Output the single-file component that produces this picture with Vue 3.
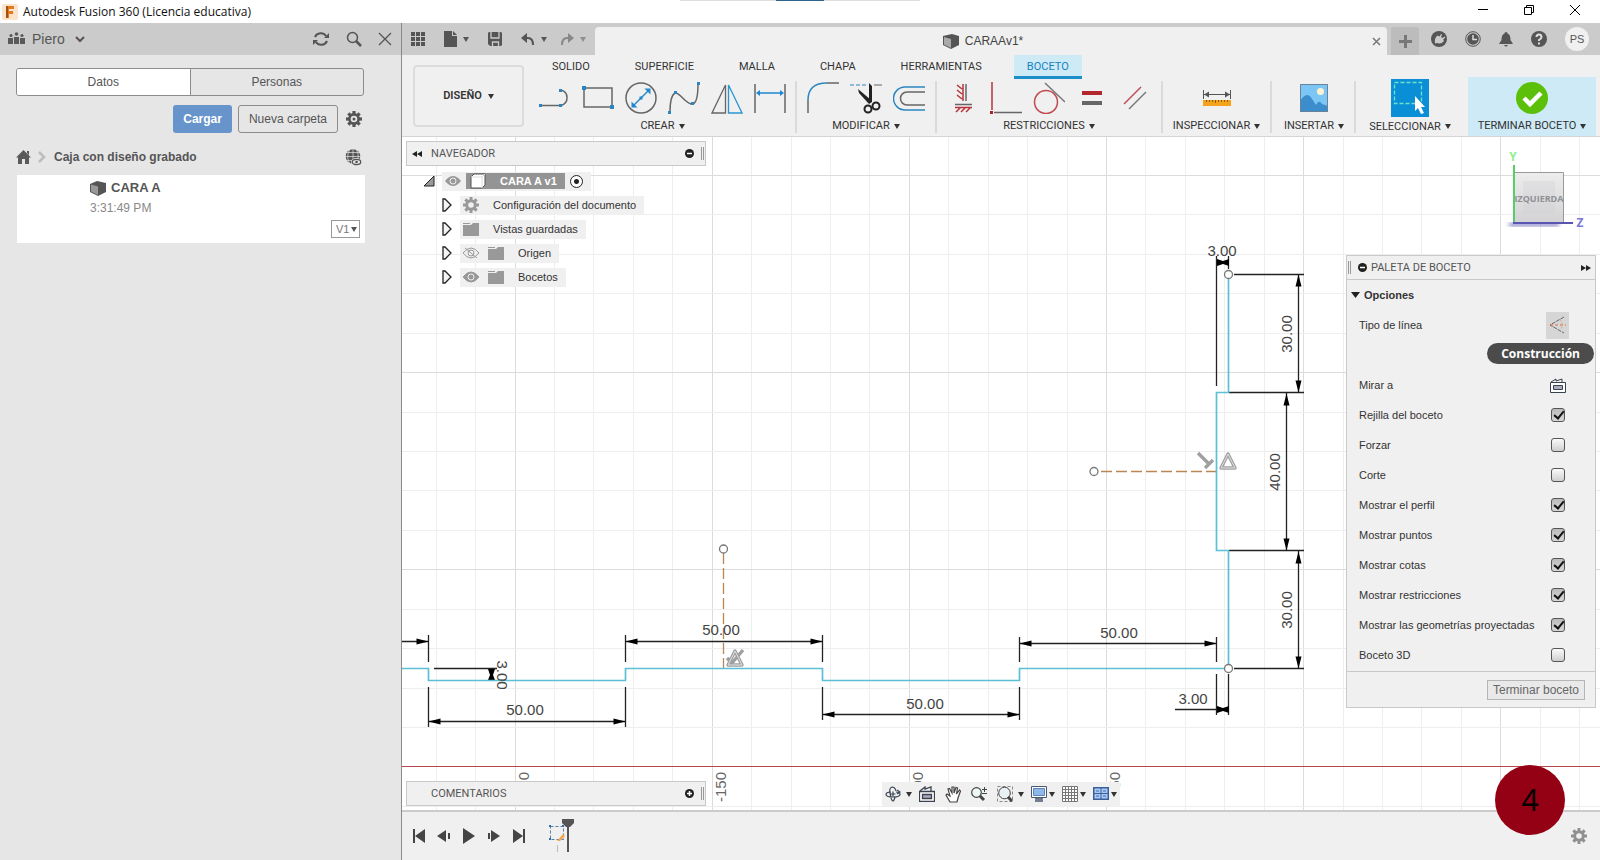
<script setup>
import { reactive } from 'vue'

const tabs = ['SOLIDO', 'SUPERFICIE', 'MALLA', 'CHAPA', 'HERRAMIENTAS', 'BOCETO']

const browserRows = [
  { label: 'Configuración del documento', icon: 'gear' },
  { label: 'Vistas guardadas', icon: 'folder' },
  { label: 'Origen', icon: 'folder', eye: 'off' },
  { label: 'Bocetos', icon: 'folder', eye: 'on' },
]

const options = reactive([
  { id: 'grid', label: 'Rejilla del boceto', on: true },
  { id: 'snap', label: 'Forzar', on: false },
  { id: 'slice', label: 'Corte', on: false },
  { id: 'profile', label: 'Mostrar el perfil', on: true },
  { id: 'points', label: 'Mostrar puntos', on: true },
  { id: 'dims', label: 'Mostrar cotas', on: true },
  { id: 'constraints', label: 'Mostrar restricciones', on: true },
  { id: 'projected', label: 'Mostrar las geometrías proyectadas', on: true },
  { id: 'sketch3d', label: 'Boceto 3D', on: false },
])

const step = 39.43
const columns = Array.from({ length: 60 }, (_, i) => ({
  at: Math.floor(515 + step * (i - 2)) + 0.5,
  major: (i - 2) % 5 === 0,
}))
const rows = Array.from({ length: 40 }, (_, i) => ({
  at: Math.round(175 + step * i) + 0.5,
  major: i % 5 === 0,
}))

const axisLabels = [
  { x: 529, text: '-200' },
  { x: 726, text: '-150' },
  { x: 923, text: '-100' },
  { x: 1120, text: '-50' },
]

// Each arrow head: tip position and the rotation of its direction.
const arrows = [
  [428, 641, 0], [625, 641, 180], [822, 641, 0], [1019, 643, 180], [1216, 643, 0],
  [428, 721, 180], [625, 721, 0], [822, 714, 180], [1019, 714, 0],
  [1298, 274, -90], [1298, 392, 90], [1286, 393, -90], [1286, 550, 90],
  [1298, 551, -90], [1298, 668, 90],
]

const gearTeeth = [0, 45, 90, 135, 180, 225, 270, 315]
</script>

<template>
  <div class="app">
    <header class="titlebar">
      <svg class="logo" width="16" height="16" viewBox="0 0 16 16">
        <rect width="16" height="16" rx="2" fill="#fbe3cc" />
        <path d="M4 2h8v3H7v2h4v3H7v4H4z" fill="#e07a1f" />
        <path d="M4 2h2v12H4z" fill="#a4500f" />
      </svg>
      <h1>Autodesk Fusion 360 (Licencia educativa)</h1>
      <i class="handle" />
      <div class="window-buttons">
        <button aria-label="Minimizar"><svg width="12" height="12"><path d="M1 5.500h10" stroke="#000" fill="none" /></svg></button>
        <button aria-label="Restaurar"><svg width="12" height="12"><path d="M1.500 3.500h7v7h-7zM3.500 3.500v-2h7v7h-2" stroke="#000" fill="none" /></svg></button>
        <button aria-label="Cerrar"><svg width="12" height="12"><path d="M1 1l10 10M11 1L1 11" stroke="#000" fill="none" /></svg></button>
      </div>
    </header>

    <div class="body">
      <aside class="data-panel">
        <div class="team-bar">
          <svg width="17" height="14" viewBox="0 0 17 14" fill="#5a5a5a">
            <circle cx="3" cy="3.500" r="1.600" /><circle cx="8.500" cy="2" r="1.800" /><circle cx="14" cy="3.500" r="1.600" />
            <path d="M0 6h5v6H0zM6 5h5v7H6zM12 6h5v6h-5z" />
          </svg>
          <button class="team">Piero
            <svg width="10" height="7" fill="none" stroke="#555" stroke-width="2"><path d="M1 1l4 4 4-4" /></svg>
          </button>
          <button aria-label="Actualizar">
            <svg width="18" height="16" viewBox="0 0 18 16" fill="none" stroke="#555" stroke-width="2">
              <path d="M3 6a6.200 6 0 0 1 11-1M15 10a6.200 6 0 0 1-11 1" />
              <path d="M17 2v5h-5zM1 14V9h5z" fill="#555" stroke="none" />
            </svg>
          </button>
          <button aria-label="Buscar">
            <svg width="16" height="16" fill="none" stroke="#555"><circle cx="6.500" cy="6.500" r="5" stroke-width="1.500" /><path d="M10 10l5 5" stroke-width="2.500" /></svg>
          </button>
          <button aria-label="Cerrar panel">
            <svg width="14" height="14" fill="none" stroke="#555" stroke-width="1.300"><path d="M1 1l12 12M13 1L1 13" /></svg>
          </button>
        </div>

        <div class="data-content">
          <div class="segmented">
            <button class="active">Datos</button>
            <button>Personas</button>
          </div>
          <div class="actions">
            <button class="primary">Cargar</button>
            <button class="outline">Nueva carpeta</button>
            <button class="plain" aria-label="Ajustes">
              <svg width="16" height="16" viewBox="-8 -8 16 16" fill="#555">
                <rect v-for="a in gearTeeth" :key="a" x="-1.600" y="-8" width="3.200" height="4" :transform="`rotate(${a})`" />
                <circle r="4.600" fill="none" stroke="#555" stroke-width="2.600" /><circle r="1.500" />
              </svg>
            </button>
          </div>
          <nav class="crumbs">
            <a href="#" aria-label="Inicio">
              <svg width="15" height="14" fill="#5a5a5a"><path d="M7.500 0L15 7.500h-2V14H9V9H6v5H2V7.500H0zM11 1h2v4l-2-2z" /></svg>
            </a>
            <svg width="9" height="12" fill="none" stroke="#bdbdbd" stroke-width="2.500"><path d="M1 1l5 5-5 5" /></svg>
            <a href="#">Caja con diseño grabado</a>
            <svg class="globe" width="17" height="17" viewBox="0 0 17 17">
              <circle cx="8" cy="7.500" r="7.300" fill="#555" />
              <path d="M8 0v15M0 7.500h16M1 3.500h14M1 11.500h14M5 0c-3 5-3 10 0 15M11 0c3 5 3 10 0 15" fill="none" stroke="#e6e6e6" stroke-width=".7" />
              <ellipse cx="11.500" cy="13" rx="5.500" ry="3.900" fill="#e6e6e6" />
              <ellipse cx="11.500" cy="13" rx="4.200" ry="2.600" fill="none" stroke="#555" stroke-width="1.300" /><circle cx="11.500" cy="13" r="1.300" fill="#555" />
            </svg>
          </nav>
          <article class="card">
            <div class="card-title">
              <svg width="16" height="15" viewBox="0 0 16 15"><path d="M0 3l7-3 9 2v9l-8 4-8-4z" fill="#555" /><path d="M1 3.500l7 2V14l-7-3.500z" fill="#999" /></svg>
              <h2>CARA A</h2>
            </div>
            <time>3:31:49 PM</time>
            <label class="version">
              <select aria-label="Versión"><option>V1</option></select>
              <i class="caret" />
            </label>
          </article>
        </div>
      </aside>

      <main class="workspace">
        <div class="tabbar">
          <div class="quick">
            <button aria-label="Panel de datos"><svg width="14" height="14" fill="#555"><path d="M0 0h4v4H0zM5 0h4v4H5zM10 0h4v4h-4zM0 5h4v4H0zM5 5h4v4H5zM10 5h4v4h-4zM0 10h4v4H0zM5 10h4v4H5zM10 10h4v4h-4z" /></svg></button>
            <button aria-label="Archivo"><svg width="13" height="16" fill="#555"><path d="M0 0h8v5h5v11H0zM9 0l4 4H9z" /></svg><i class="caret" /></button>
            <button aria-label="Guardar"><svg width="14" height="14"><path d="M0 1l1-1h12l1 1v12l-1 1H2l-2-2z" fill="#555" /><path d="M3 0v6h8V0M4.500 14v-4h6v4" fill="none" stroke="#cbcbcb" stroke-width="1.300" /></svg></button>
            <button aria-label="Deshacer"><svg width="14" height="13"><path d="M2 5h5q5 0 5 7" fill="none" stroke="#555" stroke-width="2" /><path d="M0 5l6-5v10z" fill="#555" /></svg><i class="caret" /></button>
            <button class="disabled" aria-label="Rehacer"><svg width="14" height="13"><path d="M12 5H7q-5 0-5 7" fill="none" stroke="#888" stroke-width="2" /><path d="M14 5L8 0v10z" fill="#888" /></svg><i class="caret" /></button>
          </div>
          <div class="doc-tab">
            <svg width="16" height="15" viewBox="0 0 16 15"><path d="M0 2l9-2 7 2v9l-8 4-8-4z" fill="#555" /><path d="M1 3l7 2V14l-7-3.500z" fill="#aaa" /></svg>
            <span>CARAAv1*</span>
            <button aria-label="Cerrar documento"><svg width="9" height="9" fill="none" stroke="#777" stroke-width="1.500"><path d="M1 1l7 7M8 1L1 8" /></svg></button>
          </div>
          <button class="new-tab" aria-label="Nuevo diseño"><svg width="13" height="13" fill="none" stroke="#777" stroke-width="3"><path d="M6.500 0v13M0 6.500h13" /></svg></button>
          <div class="status">
            <button aria-label="Extensiones"><svg width="16" height="16"><circle cx="8" cy="8" r="8" fill="#555" /><path d="M4 12.500Q3 7 6.500 4.500l2 1L10 3l1 .7-1 2.300 1.500 1 2-1.500.8 1-2 1.800.5 2Q10 13.500 6 12z" fill="#cbcbcb" /></svg></button>
            <button aria-label="Estado de trabajos"><svg width="16" height="16"><circle cx="8" cy="8" r="7.300" fill="none" stroke="#555" /><circle cx="8" cy="8" r="5.800" fill="#555" /><path d="M8 4v4.500h4" fill="none" stroke="#ddd" stroke-width="1.500" /></svg></button>
            <button aria-label="Notificaciones"><svg width="14" height="15" fill="#555"><path d="M7 0c1 0 1.500 1 1.500 1.500C11 2.500 11.500 5 11.500 8L14 12H0l2.500-4C2.500 5 3 2.500 5.500 1.500 5.500 1 6 0 7 0zM5 13h4q-2 3-4 0z" /></svg></button>
            <button aria-label="Ayuda"><svg width="16" height="16"><circle cx="8" cy="8" r="8" fill="#555" /><path d="M5.500 6q0-2.500 2.500-2.500T10.500 6Q10.500 7.500 8 9v1M8 11.500v2" fill="none" stroke="#ddd" stroke-width="2" /></svg></button>
            <button class="avatar">PS</button>
          </div>
        </div>

        <div class="ribbon">
          <button class="mode">DISEÑO <i class="caret" /></button>
          <div class="ribbon-main">
            <nav class="ribbon-tabs">
              <button v-for="t in tabs" :key="t" :class="{ active: t === 'BOCETO' }">{{ t }}</button>
            </nav>
            <div class="groups">
              <section class="group create">
                <div class="tools">
                  <button aria-label="Línea"><svg width="32" height="32" fill="none" stroke="#666"><path d="M1.500 23.500h21" stroke-width="1.500" /><path d="M22 8a8 8 0 0 1 0 15.500" stroke-width="1.500" /><path d="M0 22h3v3H0zM20 22h3v3h-3zM20 7h3v3h-3z" fill="#2b86c0" stroke="none" /></svg></button>
                  <button aria-label="Rectángulo"><svg width="32" height="32" fill="none" stroke="#666" stroke-width="1.500"><path d="M2 6h28v19H2z" /><path d="M0 4h4v4H0zM28 23h4v4h-4z" fill="#2b86c0" stroke="none" /></svg></button>
                  <button aria-label="Círculo"><svg width="32" height="32" fill="none" stroke="#666" stroke-width="1.500"><circle cx="16" cy="16" r="15" /><path d="M9 23L23 9" stroke="#2b86c0" /><path d="M6.500 25.500v-6l6 6zM25.500 6.500h-6l6 6zM14.500 14.500h3v3h-3z" fill="#1e88d2" stroke="none" /></svg></button>
                  <button aria-label="Spline"><svg width="32" height="32" fill="none" stroke="#666" stroke-width="1.500"><path d="M2 30Q2 14 7 11C12 10 19 24 25 22Q30 20 30 2" /><path d="M0 29h3v3H0zM6 9h3v3H6zM23 20h3v3h-3zM29 0h3v3h-3z" fill="#2b86c0" stroke="none" /></svg></button>
                  <button aria-label="Simetría"><svg width="32" height="32" fill="none" stroke-width="1.300"><path d="M14.500 3v28H1z" stroke="#666" /><path d="M17.500 3v28H31z" stroke="#2b95d0" /></svg></button>
                  <button aria-label="Cota"><svg width="32" height="32" fill="none"><path d="M1 2v29M31 2v29" stroke="#666" stroke-width="1.500" /><path d="M3 11h26" stroke="#1e88d2" stroke-width="1.500" /><path d="M2 11l4-3v6zM30 11l-4-3v6z" fill="#1e88d2" /></svg></button>
                </div>
                <button class="group-label">CREAR <i class="caret" /></button>
              </section>
              <section class="group modify">
                <div class="tools">
                  <button aria-label="Empalme"><svg width="32" height="32" fill="none" stroke-width="1.500"><path d="M1 18v13M20 1h12" stroke="#666" /><path d="M1 18Q1 1 20 1" stroke="#2b86c0" /></svg></button>
                  <button aria-label="Recortar"><svg width="32" height="32" fill="none"><path d="M0 3h18" stroke="#2b86c0" stroke-dasharray="4 2" /><path d="M24 3h8" stroke="#666" /><path d="M19 1l3 3v16l-3 2zM8 7l13 11-2 4L9 11z" fill="#222" /><circle cx="18" cy="27" r="3.500" stroke="#222" stroke-width="2" /><circle cx="26" cy="24" r="3.500" stroke="#222" stroke-width="2" /></svg></button>
                  <button aria-label="Desfase"><svg width="32" height="32" fill="none" stroke-width="1.500"><path d="M32 5H12a11 11 0 0 0 0 23h20" stroke="#2b86c0" /><path d="M32 10H14a6.500 6.500 0 0 0 0 13h18" stroke="#666" /></svg></button>
                </div>
                <button class="group-label">MODIFICAR <i class="caret" /></button>
              </section>
              <section class="group constrain">
                <div class="tools">
                  <button aria-label="Horizontal/Vertical"><svg width="32" height="32" fill="none" stroke="#b8333a" stroke-width="1.500"><path d="M16 2v17M10 3l5 4M10 8l5 4M10 13l5 4M13 26l-4 4M18 26l-4 4M23 26l-4 4M8 25.500h17" /><path d="M19 2v17M8 22.500h17" stroke="#666" /></svg></button>
                  <button aria-label="Coincidente"><svg width="32" height="32" fill="none" stroke-width="1.500"><path d="M2 0v28" stroke="#b8333a" /><path d="M4 30.500h28" stroke="#666" /><path d="M0 29h3v3H0z" fill="#a8232a" /></svg></button>
                  <button aria-label="Tangente"><svg width="32" height="32" fill="none" stroke-width="1.500"><circle cx="13" cy="20" r="11.500" stroke="#c04a50" /><path d="M12 1l20 19" stroke="#777" /></svg></button>
                  <button aria-label="Igual"><svg width="32" height="32"><path d="M6 9h20v4H6z" fill="#b3262d" /><path d="M6 19h20v4H6z" fill="#666" /></svg></button>
                  <button aria-label="Paralela"><svg width="32" height="32" fill="none" stroke-width="1.500"><path d="M5 22L22 5" stroke="#c04a50" /><path d="M10 27l17-17" stroke="#777" /></svg></button>
                </div>
                <button class="group-label">RESTRICCIONES <i class="caret" /></button>
              </section>
              <section class="group inspect">
                <div class="tools">
                  <button aria-label="Medir"><svg width="32" height="32"><path d="M2.500 8v9M29.500 8v9M3 12.500h26" stroke="#555" fill="none" /><path d="M3 12.500l5-3v6zM29 12.500l-5-3v6z" fill="#555" /><path d="M2 18h28v6H2z" fill="#f5a31a" /><path d="M5.500 18v2M8.500 18v2M11.500 18v2M14.500 18v3M17.500 18v2M20.500 18v2M23.500 18v2M26.500 18v2" stroke="#8a5a00" /></svg></button>
                </div>
                <button class="group-label">INSPECCIONAR <i class="caret" /></button>
              </section>
              <section class="group insert">
                <div class="tools">
                  <button aria-label="Insertar imagen"><svg width="32" height="32"><path d="M2 2h28v28H2z" fill="#7cc6f6" /><path d="M2 30V19q7-11 12-2l4 6q3-6 6-1l6 2v6z" fill="#3b8ecb" /><circle cx="22.500" cy="9.500" r="3.500" fill="#fff3cf" /><path d="M2.500 2.500h27v27h-27z" fill="none" stroke="#68839a" /></svg></button>
                </div>
                <button class="group-label">INSERTAR <i class="caret" /></button>
              </section>
              <section class="group select">
                <div class="tools">
                  <button aria-label="Seleccionar"><svg width="38" height="38"><path d="M0 0h38v38H0z" fill="#0a8fd6" /><path d="M3.500 3.500h27v21h-27z" fill="none" stroke="#6be3c8" stroke-width="1.300" stroke-dasharray="4 2" /><path d="M24 17v15l3-3 3 6 3-1-3-6h4z" fill="#fff" /></svg></button>
                </div>
                <button class="group-label">SELECCIONAR <i class="caret" /></button>
              </section>
              <section class="group finish">
                <div class="tools">
                  <button aria-label="Terminar boceto"><svg width="32" height="32"><circle cx="16" cy="16" r="16" fill="#5cc00a" /><path d="M8 16l6 6 11-11" fill="none" stroke="#fff" stroke-width="4.500" /></svg></button>
                </div>
                <button class="group-label">TERMINAR BOCETO <i class="caret" /></button>
              </section>
            </div>
          </div>
        </div>

        <div class="canvas">
          <svg class="sheet">
            <g transform="translate(-402 -137)">
              <g class="grid-lines">
                <path v-for="c in columns" :key="'c' + c.at" :class="{ major: c.major }" :d="`M${c.at} 130v1500`" />
                <path v-for="r in rows" :key="'r' + r.at" :class="{ major: r.major }" :d="`M402 ${r.at}h2400`" />
              </g>
              <path d="M402 766.500h2400" stroke="#b8474d" />
              <g class="numbers">
                <text v-for="l in axisLabels" :key="l.text" text-anchor="end" class="axis" :transform="`translate(${l.x} 772) rotate(-90)`">{{ l.text }}</text>
              </g>

              <g class="dims">
                <path d="M402 641.500h26M428.500 635v27M625.500 635v27M625 641.500h197M822.500 635v27M1019.500 637v25M1019 643.500h197M1216.500 637v25" />
                <path d="M428.500 687v40M625.500 687v40M428 721.500h197M822.500 687v33M1019.500 687v33M822 714.500h197" />
                <path d="M1216.500 674v41M1228.500 674v41M1175 709.500h54M434 668.500h63M491.500 668v12" />
                <path d="M1216.500 256v130M1228.500 256v13M1217 262.500h11M1234 274.500h70M1229 392.500h75M1229 550.500h75M1234 668.500h70" />
                <path d="M1298.500 274v118M1286.500 393v157M1298.500 551v117" />
              </g>
              <path v-for="(a, i) in arrows" :key="i" d="M0 0l-12-3v6z" :transform="`translate(${a[0] + 0.5} ${a[1] + 0.5}) rotate(${a[2]})`" />
              <path d="M1217 259l6 2 6-2v7l-6-2-6 2zM1217 706l6 2 6-2v7l-6-2-6 2zM488 669h7l-2 6 2 5h-7l2-5z" />

              <g fill="none" stroke="#bd8454" stroke-width="1.300" stroke-dasharray="11 4">
                <path d="M723.500 553v115" /><path d="M1101 471.500h115" />
              </g>
              <path class="profile" d="M402 668.500h26.500v12h197v-12h197v12h197v-12h209V550.500h-12V392.500h12V274" />
              <g class="points">
                <circle cx="723.500" cy="549" r="4" /><circle cx="1094" cy="471.500" r="4" />
                <circle cx="1228.500" cy="274.500" r="4" /><circle cx="1228.500" cy="668.500" r="4" />
              </g>
              <g class="marks">
                <path d="M1221 468h14l-7-14z" /><path d="M1198 453l11 11M1205 468l8-8" />
                <path d="M728 665h14l-7-14zM727 658l5 5 11-13" />
              </g>
              <path class="mark-core" d="M1221 468h14l-7-14zM728 665h14l-7-14z" />

              <g class="numbers" text-anchor="middle">
                <text x="525" y="715">50.00</text><text x="721" y="635">50.00</text>
                <text x="925" y="709">50.00</text><text x="1119" y="638">50.00</text>
                <text x="1193" y="704">3.00</text><text x="1222" y="256">3.00</text>
                <text transform="translate(497 675) rotate(90)">3.00</text>
                <text transform="translate(1292 334) rotate(-90)">30.00</text>
                <text transform="translate(1280 472) rotate(-90)">40.00</text>
                <text transform="translate(1292 610) rotate(-90)">30.00</text>
              </g>
            </g>
          </svg>

          <svg class="view-cube" width="80" height="84" viewBox="0 0 80 84">
            <defs>
              <linearGradient id="face" x1="0" y1="0" x2="0" y2="1"><stop offset="0" stop-color="#ededed" /><stop offset="1" stop-color="#d3d3d5" /></linearGradient>
              <filter id="soft"><feGaussianBlur stdDeviation="2" /></filter>
            </defs>
            <path d="M4 74h50v3H4z" fill="#6b66b8" filter="url(#soft)" />
            <path d="M9.500 23.500h49v50h-49z" fill="url(#face)" stroke="#999" />
            <path d="M18 32h32v33H18z" fill="#d0d0d3" opacity=".35" />
            <path d="M9 16v57" stroke="#55cf66" stroke-width="2" /><path d="M8 74h60" stroke="#5a55b0" stroke-width="2" />
            <text x="34" y="53" text-anchor="middle" class="cube-face">IZQUIERDA</text>
            <text x="8" y="12" text-anchor="middle" class="cube-axis" fill="#8fee8f">Y</text>
            <text x="75" y="78" text-anchor="middle" class="cube-axis" fill="#7d78d8">Z</text>
          </svg>

          <div class="browser">
            <div class="dock">
              <svg width="10" height="6" fill="#222"><path d="M5 0v6L0 3zM10 0v6L5 3z" /></svg>
              <span>NAVEGADOR</span>
              <svg width="9" height="9"><circle cx="4.500" cy="4.500" r="4.500" fill="#222" /><path d="M2 4.500h5" stroke="#fff" stroke-width="1.500" /></svg>
              <i class="grip" />
            </div>
            <div class="tree">
              <div class="tree-row root">
                <svg width="12" height="12"><path d="M11 1v10H1z" fill="#999" stroke="#222" /></svg>
                <div class="chip">
                  <svg width="16" height="10"><path d="M0 5q8-10 16 0-8 10-16 0z" fill="#999" /><circle cx="8" cy="5" r="3" fill="#999" stroke="#eee" /></svg>
                  <span class="root-name">
                    <svg width="16" height="16"><path d="M1 4l3-3h11v11l-3 3H1z" fill="#fff" stroke="#555" /><path d="M12 4v11M1 4h11l3-3" stroke="#ddd" fill="none" /></svg>
                    CARA A v1
                  </span>
                  <input type="radio" checked aria-label="Activar CARA A v1" />
                </div>
              </div>
              <div v-for="r in browserRows" :key="r.label" class="tree-row">
                <svg width="10" height="14"><path d="M1 1h2l6 6-6 6H1z" fill="#f4f4f4" stroke="#222" stroke-width="1.300" /></svg>
                <div class="chip">
                  <svg v-if="r.eye" width="16" height="12">
                    <path d="M0 6q8-10 16 0-8 10-16 0z" :fill="r.eye === 'on' ? '#999' : '#f0f0f0'" stroke="#999" />
                    <circle cx="8" cy="6" r="3" :fill="r.eye === 'on' ? '#999' : 'none'" :stroke="r.eye === 'on' ? '#eee' : '#999'" />
                    <path v-if="r.eye === 'off'" d="M2 1l12 10" stroke="#999" />
                  </svg>
                  <svg v-if="r.icon === 'gear'" width="16" height="16" viewBox="-8 -8 16 16" fill="#999">
                    <rect v-for="a in gearTeeth" :key="a" x="-1.500" y="-8" width="3" height="4" :transform="`rotate(${a})`" />
                    <circle r="4.300" fill="none" stroke="#999" stroke-width="3" />
                  </svg>
                  <svg v-else width="16" height="13" fill="#999"><path d="M0 0h7v1H0zM0 2h8l2-2h6v13H0z" /></svg>
                  <span>{{ r.label }}</span>
                </div>
              </div>
            </div>
          </div>

          <div class="dock comments">
            <span>COMENTARIOS</span>
            <svg width="9" height="9"><circle cx="4.500" cy="4.500" r="4.500" fill="#222" /><path d="M2 4.500h5M4.500 2v5" stroke="#fff" stroke-width="1.500" /></svg>
            <i class="grip" />
          </div>

          <section class="palette">
            <div class="palette-head">
              <i class="grip" />
              <svg width="9" height="9"><circle cx="4.500" cy="4.500" r="4.500" fill="#222" /><path d="M2 4.500h5" stroke="#fff" stroke-width="1.500" /></svg>
              <span>PALETA DE BOCETO</span>
              <svg width="10" height="6" fill="#222"><path d="M0 0v6l5-3zM5 0v6l5-3z" /></svg>
            </div>
            <div class="palette-body">
              <h3><svg width="9" height="6" fill="#222"><path d="M0 0h9L4.500 6z" /></svg> Opciones</h3>
              <div class="option line-type">
                <span>Tipo de línea</span>
                <button class="pressed" aria-label="Construcción">
                  <svg width="17" height="18" fill="none"><path d="M15 1L1 9l14 8" stroke="#666" stroke-dasharray="4 1" /><path d="M1 9h16" stroke="#e07030" stroke-dasharray="3 2" /><path d="M11 3q4 6 0 12" stroke="#d9a07a" stroke-dasharray="2 2" /></svg>
                </button>
                <span class="tip" role="tooltip">Construcción</span>
              </div>
              <div class="option">
                <span>Mirar a</span>
                <button class="flat" aria-label="Mirar a"><svg width="16" height="15" fill="none" stroke="#3a4250"><path d="M.5 4.500h15v10H.5z" fill="#fff" /><path d="M3.500 7.500h9v4h-9z" fill="#aab" /><path d="M1 4l5-3v2l6-2v3" /></svg></button>
              </div>
              <label v-for="o in options" :key="o.id" class="option" :for="o.id">
                <span>{{ o.label }}</span>
                <input :id="o.id" v-model="o.on" type="checkbox" />
              </label>
            </div>
            <div class="palette-foot"><button>Terminar boceto</button></div>
          </section>

          <div class="viewbar">
            <button aria-label="Órbita"><svg width="16" height="16" fill="none" stroke="#3a4656" stroke-width="1.200"><path d="M6 6Q1 6 1 8.500T8 11t7-2.500-4-2.500" /><path d="M6 11q-3-9 1-10 3 0 4 4M6 12q1 3 2 3t2-4M12 4l3 2-3 2M8 5.500v5M5.500 8h5" /></svg><i class="caret" /></button>
            <button class="lone" aria-label="Mirar a"><svg width="16" height="16" fill="none" stroke="#3a4250" stroke-width="1.300"><path d="M.5 5.500h15v10H.5z" fill="#fff" /><path d="M3.500 8.500h9v4h-9z" fill="#aab" /><path d="M1 5l5-4v2l6-2v4" /></svg></button>
            <button class="lone" aria-label="Encuadre"><svg width="16" height="17" fill="#fff" stroke="#444" stroke-width="1.200"><path d="M5 16L1 9l1-1 3 2-2-7 1.500-.5L7 7V1h2v6l2-5.500 1.500.5L11.500 8l3-4 1 1-2.500 7-1 4z" /></svg></button>
            <button class="lone" aria-label="Zoom"><svg width="16" height="16" fill="none" stroke="#444"><circle cx="5.500" cy="6.500" r="4.800" fill="#eef6f8" stroke-width="1.200" /><path d="M9 10l4 4" stroke-width="3" /><path d="M11 3.500h5M13.500 1v5M11 7.500h5" /></svg></button>
            <button aria-label="Zoom ventana"><svg width="16" height="16" fill="none" stroke="#444"><path d="M.5.500h15v15H.5z" stroke-dasharray="3 2" stroke="#888" /><circle cx="7.500" cy="7" r="5.800" fill="#e8f2f5" /><path d="M11 11l4 4" stroke-width="3" /></svg><i class="caret" /></button>
            <button class="tight" aria-label="Visualización"><svg width="16" height="16" fill="none" stroke="#4a5870"><path d="M.5.500h15v11H.5z" fill="#fff" /><path d="M2.500 2.500h11v7h-11z" fill="#8fb8ea" stroke="#5b86c0" /><path d="M5 12v1h6v-1M4 15h8" stroke-width="1.500" /></svg><i class="caret" /></button>
            <button class="tight" aria-label="Rejilla"><svg width="16" height="16" fill="#fff" stroke="#777"><path d="M.5.500h15v15H.5zM3.500 0v16M6.500 0v16M9.500 0v16M12.500 0v16M0 3.500h16M0 6.500h16M0 9.500h16M0 12.500h16" /></svg><i class="caret" /></button>
            <button class="tight" aria-label="Vistas"><svg width="16" height="14"><path d="M0 0h16v13H0z" fill="#3c5f9c" /><path d="M1.500 1.500h6v4.500h-6zM8.500 1.500h6v4.500h-6zM1.500 7h6v4.500h-6zM8.500 7h6v4.500h-6z" fill="#a9c9f2" /><path d="M3 3h3v2H3zM10 3h3v2h-3zM3 8h3v2H3zM10 8h3v2h-3z" fill="#6f9cd8" /></svg><i class="caret" /></button>
          </div>
        </div>

        <footer class="timeline">
          <button aria-label="Inicio"><svg width="14" height="14" fill="#444"><path d="M1 0h2v14H1zM13 0v14L3 7z" /></svg></button>
          <button aria-label="Paso atrás"><svg width="14" height="14" fill="#444"><path d="M9 1v12L0 7zM11 4h2v6h-2z" /></svg></button>
          <button aria-label="Reproducir"><svg width="14" height="16" fill="#444"><path d="M1 0l12 8-12 8z" /></svg></button>
          <button aria-label="Paso adelante"><svg width="14" height="14" fill="#444"><path d="M4 1v12l9-6zM1 4h2v6H1z" /></svg></button>
          <button aria-label="Final"><svg width="14" height="14" fill="#444"><path d="M11 0h2v14h-2zM1 0v14l10-7z" /></svg></button>
          <button class="feature" aria-label="Boceto">
            <svg width="28" height="34" fill="none">
              <path d="M3.500 7.500h13v13h-13z" stroke="#5a7da0" stroke-dasharray="3 2" />
              <path d="M2 6h2v2H2zM15 6h2v2h-2zM2 19h2v2H2z" fill="#2b70b0" />
              <path d="M10 22l6-7 2 2-5 5z" fill="#f2a648" /><path d="M10.500 26v7" stroke="#bbb" />
              <path d="M15 0h12v4l-4 4h-4l-4-4z" fill="#555" /><path d="M21 4v29" stroke="#555" stroke-width="2" />
            </svg>
          </button>
          <button class="timeline-settings" aria-label="Ajustes de línea de tiempo">
            <svg width="16" height="16" viewBox="-8 -8 16 16" fill="#909090">
              <rect v-for="a in gearTeeth" :key="a" x="-1.500" y="-8" width="3" height="4" :transform="`rotate(${a})`" />
              <circle r="4.300" fill="none" stroke="#909090" stroke-width="3" />
            </svg>
          </button>
          <span class="step-badge">4</span>
        </footer>
      </main>
    </div>
  </div>
</template>

<style>
body {
  margin: 0;
}
</style>

<style scoped>
* {
  box-sizing: border-box;
}
.app {
  display: flex;
  flex-direction: column;
  min-height: 100vh;
  overflow: hidden;
  background: #fff;
  color: #333;
  font: 11px/16px "Liberation Sans", Arial, sans-serif;
}
button {
  display: inline-flex;
  align-items: center;
  justify-content: center;
  margin: 0;
  padding: 0;
  border: 0;
  background: none;
  color: inherit;
  font: inherit;
  white-space: nowrap;
}
svg {
  display: block;
  flex: none;
}
a {
  color: inherit;
  text-decoration: none;
}
h1, h2, h3 {
  margin: 0;
  font: inherit;
}
.caret {
  flex: none;
  border: 3px solid transparent;
  border-top: 5px solid currentColor;
  border-bottom: 0;
}

.titlebar {
  position: relative;
  display: flex;
  align-items: center;
  height: 23px;
  padding: 0 19px 0 2px;
  color: #111;
}
.titlebar h1 {
  flex: 1;
  margin-left: 5px;
  font: 12px/20px "Open Sans", sans-serif;
}
.handle {
  position: absolute;
  top: 0;
  left: 50%;
  width: 240px;
  height: 1px;
  margin-left: -120px;
  background: linear-gradient(90deg, #ddd 96px, #2d648a 96px 144px, #ddd 144px);
}
.window-buttons {
  display: flex;
  gap: 34px;
  margin-top: -3px;
}

.body {
  display: flex;
  flex: 1;
}
.data-panel {
  width: 402px;
  flex: none;
  border-right: 1px solid #8a8a8a;
  background: #e6e6e6;
  color: #555;
}
.team-bar {
  display: flex;
  align-items: center;
  gap: 16px;
  height: 32px;
  padding: 0 9px 0 8px;
  background: #cbcbcb;
}
.team {
  gap: 10px;
  margin: 0 auto 0 -9px;
  font-size: 14px;
}
.data-content {
  padding: 13px 37px 0 16px;
  font-size: 12px;
}
.segmented {
  display: flex;
  height: 28px;
  border: 1px solid #8c8c8c;
  border-radius: 3px;
}
.segmented button {
  flex: 1;
}
.segmented .active {
  border-right: 1px solid #8c8c8c;
  border-radius: 2px 0 0 2px;
  background: #fff;
}
.actions {
  display: flex;
  align-items: center;
  justify-content: flex-end;
  gap: 6px;
  margin-top: 9px;
}
.primary, .outline {
  height: 28px;
  padding: 0 10px;
  border-radius: 3px;
}
.primary {
  background: #6694cb;
  color: #fff;
  font-weight: bold;
}
.outline {
  border: 1px solid #8c8c8c;
}
.plain {
  width: 20px;
}
.crumbs {
  display: flex;
  align-items: center;
  gap: 7px;
  height: 18px;
  margin-top: 15px;
  padding-right: 2px;
  font-weight: bold;
}
.globe {
  margin-left: auto;
}
.card {
  position: relative;
  height: 68px;
  margin: 9px -1px 0 1px;
  padding: 4px 0 0 73px;
  background: #fff;
}
.card-title {
  display: flex;
  align-items: center;
  gap: 5px;
}
.card-title h2 {
  font: bold 13px/18px "Liberation Sans", Arial, sans-serif;
}
.card time {
  display: block;
  margin-top: 3px;
  color: #888;
}
.version {
  position: absolute;
  right: 5px;
  bottom: 5px;
  display: flex;
  align-items: center;
  width: 29px;
  height: 18px;
  border: 1px solid #999;
}
.version select {
  width: 27px;
  padding: 0 0 0 4px;
  border: 0;
  background: none;
  color: #777;
  font: 11px/16px "Liberation Sans", Arial, sans-serif;
  appearance: none;
}
.version .caret {
  position: absolute;
  right: 2px;
}

.workspace {
  display: flex;
  flex: 1;
  flex-direction: column;
  min-width: 0;
}
.tabbar {
  display: flex;
  height: 32px;
  background: #cbcbcb;
  color: #555;
}
.quick {
  display: flex;
  align-items: center;
  gap: 19px;
  width: 193px;
  flex: none;
  padding-left: 9px;
}
.quick button {
  gap: 6px;
}
.quick .disabled {
  margin-left: -6px;
  color: #8f8f8f;
}
.doc-tab {
  position: relative;
  display: flex;
  flex: 1;
  align-items: center;
  justify-content: center;
  gap: 6px;
  margin-top: 4px;
  padding-right: 16px;
  border-radius: 4px 4px 0 0;
  background: #f0f0f0;
  color: #444;
  font-size: 12px;
}
.doc-tab button {
  position: absolute;
  right: 6px;
}
.new-tab {
  width: 28px;
  margin: 4px 0 0 4px;
  border-radius: 3px 3px 0 0;
  background: #bcbcbc;
}
.status {
  display: flex;
  align-items: center;
  gap: 18px;
  padding: 0 11px 0 12px;
}
.status .avatar {
  width: 24px;
  height: 24px;
  border-radius: 50%;
  background: #f0f0f0;
}

.ribbon {
  display: flex;
  height: 82px;
  border-bottom: 1px solid #d4d4d4;
  background: #f0f0f0;
  font-family: Roboto, sans-serif;
}
.mode {
  gap: 6px;
  width: 111px;
  height: 62px;
  flex: none;
  margin: 10px 6px 0 11px;
  border: 2px solid #dcdcdc;
  border-radius: 4px;
  font-weight: 600;
}
.ribbon-main {
  display: flex;
  flex: 1;
  flex-direction: column;
  min-width: 0;
}
.ribbon-tabs {
  display: flex;
  gap: 19px;
  height: 24px;
  padding-left: 9px;
}
.ribbon-tabs button {
  padding: 0 13px;
}
.ribbon-tabs .active {
  background: #cdeaf6;
  box-shadow: inset 0 -3px #1d8fc8;
  color: #1583c0;
}
.groups {
  display: flex;
  flex: 1;
  padding-right: 4px;
}
.group {
  position: relative;
  display: flex;
  flex: none;
  flex-direction: column;
  align-items: center;
  height: 57px;
}
.group:not(.finish, .select)::after {
  position: absolute;
  top: 2px;
  right: 0;
  width: 2px;
  height: 52px;
  background: #dadada;
  content: "";
}
.tools {
  display: flex;
  align-items: center;
  height: 38px;
}
.tools button {
  width: 43px;
}
.group-label {
  gap: 4px;
  height: 20px;
}
.create { width: 267px; padding-right: 2px; }
.modify { width: 140px; padding-right: 2px; }
.constrain { width: 226px; padding-right: 2px; }
.inspect { width: 109px; padding-right: 2px; }
.insert { width: 84px; }
.select { flex: 1; padding-right: 4px; }
.group.finish {
  width: 128px;
  height: 59px;
  margin-top: -2px;
  padding-top: 2px;
  background: #cdeaf6;
}

.canvas {
  position: relative;
  flex: 1;
  min-height: 600px;
  overflow: hidden;
}
.sheet {
  position: absolute;
  width: 100%;
  height: 100%;
}
.grid-lines path {
  stroke: #eee;
}
.grid-lines .major {
  stroke: #dcdcdc;
}
.dims path {
  fill: none;
  stroke: #222;
  stroke-width: 1.3;
}
.profile {
  fill: none;
  stroke: #5dbfd6;
  stroke-width: 1.7;
}
.points circle {
  fill: #fff;
  stroke: #777;
  stroke-width: 1.3;
}
.marks path {
  fill: none;
  stroke: #a0a0a0;
  stroke-width: 3.4;
  stroke-linejoin: round;
}
.mark-core {
  fill: none;
  stroke: #e2e2e2;
}
.numbers {
  fill: #444;
  font-size: 15px;
}
.axis {
  fill: #666;
}
.view-cube {
  position: absolute;
  top: 12px;
  right: 15px;
}
.cube-face {
  fill: #909095;
  font: bold 9px "Open Sans", sans-serif;
}
.cube-axis {
  font: bold 12px "Open Sans", sans-serif;
}

.browser {
  position: absolute;
  top: 4px;
  left: 4px;
  width: 300px;
}
.dock {
  display: flex;
  align-items: center;
  width: 300px;
  height: 25px;
  padding: 0 1px 0 5px;
  border: 1px solid #c9c9c9;
  background: #f0f0f0;
  color: #555;
  font-family: Roboto, sans-serif;
}
.dock span {
  flex: 1;
  margin-left: 9px;
}
.dock .grip {
  margin-left: 7px;
}
.grip {
  width: 3px;
  height: 13px;
  border: 1px solid #999;
  border-width: 0 1px;
}
.comments {
  position: absolute;
  bottom: 4px;
  left: 4px;
  padding-left: 15px;
}
.tree-row {
  display: flex;
  align-items: center;
  gap: 8px;
  height: 24px;
  padding-left: 36px;
}
.tree-row.root {
  gap: 7px;
  margin-top: 3px;
  padding-left: 17px;
}
.chip {
  display: flex;
  align-items: center;
  gap: 9px;
  height: 19px;
  padding: 0 8px 0 3px;
  background: #f0f0f0;
}
.chip span {
  margin-left: 5px;
}
.root .chip {
  gap: 5px;
}
.chip .root-name {
  display: flex;
  align-items: center;
  gap: 14px;
  height: 16px;
  margin: 0;
  padding: 0 8px 0 3px;
  background: #949494;
  color: #fff;
  font-weight: bold;
}
.root-name svg {
  margin-left: 1px;
}
.chip input {
  width: 13px;
  height: 13px;
  margin: 0;
  border: 1px solid #222;
  border-radius: 50%;
  background: radial-gradient(circle, #222 2px, #fff 3px);
  appearance: none;
}

.palette {
  position: absolute;
  top: 118px;
  right: 4px;
  width: 250px;
  border: 1px solid #c9c9c9;
  background: #f0f0f0;
}
.palette-head {
  display: flex;
  align-items: center;
  height: 24px;
  padding: 0 4px 0 1px;
  border-bottom: 1px solid #c9c9c9;
  color: #555;
  font-family: Roboto, sans-serif;
}
.palette-head svg:first-of-type {
  margin: 0 4px 0 7px;
}
.palette-head span {
  flex: 1;
}
.palette-body {
  padding-bottom: 1px;
}
.palette h3 {
  display: flex;
  align-items: center;
  gap: 4px;
  height: 30px;
  padding-left: 4px;
  font-weight: bold;
}
.option {
  position: relative;
  display: flex;
  align-items: center;
  justify-content: space-between;
  height: 30px;
  padding: 0 30px 0 12px;
}
.line-type {
  margin-bottom: 30px;
  padding-right: 26px;
}
.pressed {
  width: 23px;
  height: 27px;
  background: #d6d6d6;
}
.tip {
  position: absolute;
  top: 33px;
  right: 1px;
  padding: 0 14px;
  border-radius: 11px;
  background: #4b4b4b;
  color: #fff;
  font: bold 12px/21px "Open Sans", sans-serif;
}
.option input {
  width: 14px;
  height: 14px;
  margin: 0;
  border: 1px solid #555;
  border-radius: 3px;
  background: linear-gradient(#fafafa, #cfcfcf);
  appearance: none;
}
.option input:checked {
  background: linear-gradient(#bbb, #d8d8d8);
}
.option input:checked::after {
  display: block;
  width: 4px;
  height: 8px;
  margin: 0 0 0 4px;
  border: solid #111;
  border-width: 0 2px 2px 0;
  transform: rotate(40deg);
  content: "";
}
.flat {
  margin-right: -1px;
}
.palette-foot {
  display: flex;
  justify-content: flex-end;
  padding: 8px 10px 7px;
  border-top: 1px solid #c9c9c9;
}
.palette-foot button {
  height: 20px;
  padding: 0 5px;
  border: 1px solid #b5b5b5;
  background: #e9e9e9;
  color: #666;
  font-size: 12px;
}

.viewbar {
  position: absolute;
  bottom: 4px;
  left: 50%;
  display: flex;
  align-items: center;
  gap: 7px;
  width: 238px;
  height: 24px;
  margin-left: -119px;
  padding-left: 3px;
  background: #f0f0f0;
}
.viewbar button {
  gap: 5px;
}
.viewbar .lone {
  margin-right: 3px;
}
.viewbar .tight {
  gap: 2px;
}

.timeline {
  position: relative;
  display: flex;
  align-items: center;
  gap: 11px;
  height: 50px;
  padding: 0 13px 0 10px;
  border-top: 2px solid #cbcbcb;
  background: #f0f0f0;
}
.feature {
  margin-left: 10px;
}
.timeline-settings {
  margin-left: auto;
}
.step-badge {
  position: absolute;
  right: 35px;
  bottom: 25px;
  width: 70px;
  height: 70px;
  border-radius: 50%;
  background: #940014;
  color: #000;
  font: 30px/70px "Noto Sans", sans-serif;
  text-align: center;
}
</style>
